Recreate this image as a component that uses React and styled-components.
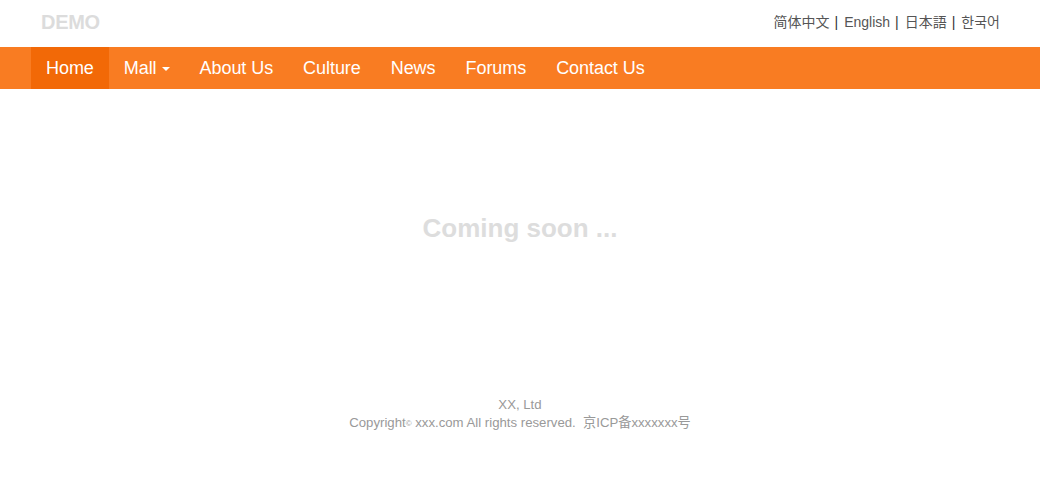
import styled, { createGlobalStyle } from "styled-components";

const GlobalStyle = createGlobalStyle`
  body {
    margin: 0;
    background: #fff;
    font-family: "Liberation Sans", Arial, "Noto Sans CJK SC", sans-serif;
  }
`;

const navItems = ["Home", "Mall", "About Us", "Culture", "News", "Forums", "Contact Us"];
const langs = ["简体中文", "English", "日本語", "한국어"];

export default function App() {
  return (
    <Page>
      <GlobalStyle />
      <TopBar>
        <Logo>DEMO</Logo>
        <Langs>
          {langs.map((l, i) => (
            <span key={l}>
              {i > 0 && <Sep>|</Sep>}
              <LangLink lang={i === 3 ? "ko" : i === 2 ? "ja" : "zh"}>{l}</LangLink>
            </span>
          ))}
        </Langs>
      </TopBar>
      <NavBar>
        <NavList>
          {navItems.map((item, i) => (
            <NavItem key={item} $active={i === 0}>
              {item}
              {item === "Mall" && <Caret />}
            </NavItem>
          ))}
        </NavList>
      </NavBar>
      <Main>
        <Soon>Coming soon ...</Soon>
      </Main>
      <Footer>
        <div>XX, Ltd</div>
        <div>
          Copyright<Small>©</Small> xxx.com All rights reserved.&nbsp;&nbsp;京ICP备xxxxxxx号
        </div>
      </Footer>
    </Page>
  );
}

const Page = styled.div`
  display: flex;
  flex-direction: column;
  min-height: 482px;
`;

const TopBar = styled.header`
  height: 47px;
  display: flex;
  align-items: center;
  justify-content: space-between;
  padding: 0 40px 0 41px;
`;

const Logo = styled.div`
  font-size: 20px;
  font-weight: bold;
  color: #dcdcdc;
  letter-spacing: -0.3px;
  margin-bottom: 2px;
`;

const Langs = styled.div`
  font-size: 14px;
  color: #555;
  margin-bottom: 6px;
`;

const LangLink = styled.a`
  color: #555;
  text-decoration: none;
  &:lang(ja) {
    font-family: "Liberation Sans", Arial, "Noto Sans CJK JP", sans-serif;
  }
  &:lang(ko) {
    font-family: "Liberation Sans", Arial, "Noto Sans CJK KR", sans-serif;
  }
`;

const Sep = styled.span`
  color: #333;
  margin: 0 6px 0 5px;
`;

const NavBar = styled.nav`
  height: 42px;
  background: #f97c22;
  padding: 0 31px;
`;

const NavList = styled.ul`
  list-style: none;
  margin: 0;
  padding: 0;
  display: flex;
  height: 100%;
`;

const NavItem = styled.li`
  display: flex;
  align-items: center;
  padding: 0 15px;
  font-size: 18px;
  letter-spacing: -0.06px;
  color: #fff;
  background: ${(p) => (p.$active ? "#f26907" : "transparent")};
  cursor: pointer;
`;

const Caret = styled.span`
  display: inline-block;
  width: 0;
  height: 0;
  margin-left: 5px;
  margin-top: 2px;
  border-left: 4px solid transparent;
  border-right: 4px solid transparent;
  border-top: 4px solid #fff;
`;

const Main = styled.main`
  height: 278px;
  display: flex;
  align-items: center;
  justify-content: center;
`;

const Soon = styled.h2`
  margin: 0;
  font-size: 26px;
  font-weight: bold;
  color: #dddddd;
`;

const Footer = styled.footer`
  padding-top: 29px;
  text-align: center;
  font-size: 13.2px;
  line-height: 18px;
  color: #999;
`;

const Small = styled.small`
  font-size: 8px;
  vertical-align: 1px;
`;
